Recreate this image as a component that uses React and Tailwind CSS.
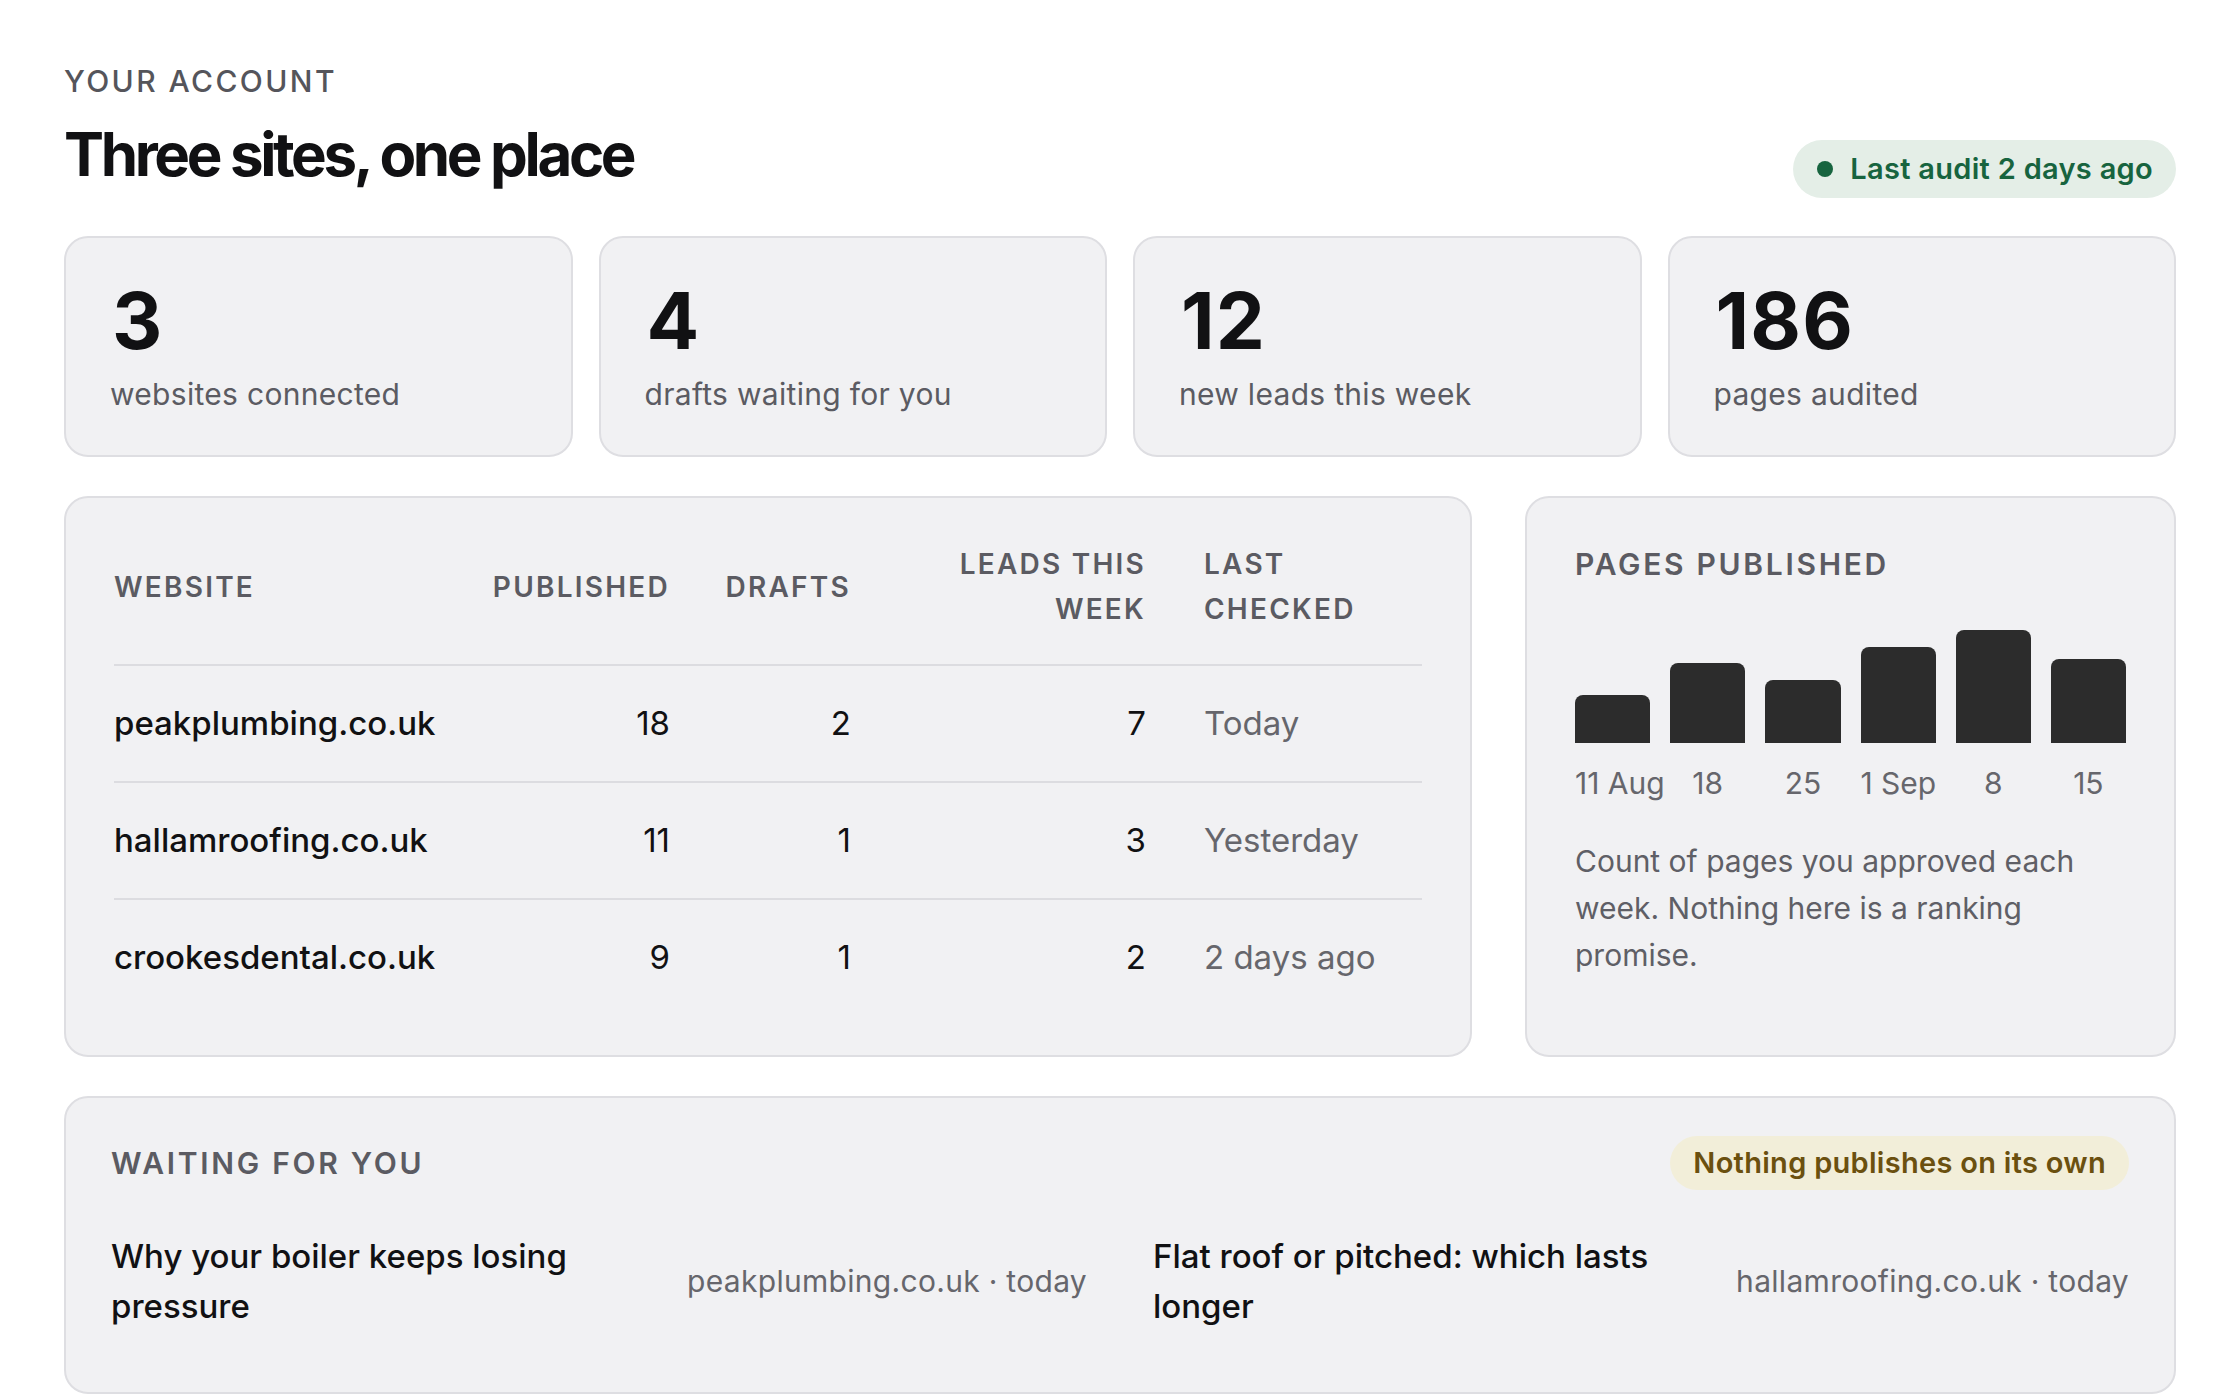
import React from 'react';

const STATS = [
  { value: '3', label: 'websites connected' },
  { value: '4', label: 'drafts waiting for you' },
  { value: '12', label: 'new leads this week' },
  { value: '186', label: 'pages audited' },
];

const SITES = [
  { site: 'peakplumbing.co.uk', published: 18, drafts: 2, leads: 7, checked: 'Today' },
  { site: 'hallamroofing.co.uk', published: 11, drafts: 1, leads: 3, checked: 'Yesterday' },
  { site: 'crookesdental.co.uk', published: 9, drafts: 1, leads: 2, checked: '2 days ago' },
];

const WEEKS = [
  { label: '11 Aug', height: 48 },
  { label: '18', height: 80 },
  { label: '25', height: 63 },
  { label: '1 Sep', height: 96 },
  { label: '8', height: 113 },
  { label: '15', height: 84 },
];

const WAITING = [
  { title: 'Why your boiler keeps losing pressure', meta: 'peakplumbing.co.uk · today' },
  { title: 'Flat roof or pitched: which lasts longer', meta: 'hallamroofing.co.uk · today' },
];

const card = 'rounded-[24px] border-2 border-[#dedee2] bg-[#f1f1f3]';
const eyebrow = 'text-[28px] font-semibold uppercase tracking-[0.08em] text-[#5b5b62]';
const sectionTitle = 'text-[30px] font-semibold uppercase tracking-[0.09em] text-[#5b5b62]';
const cols = 'grid grid-cols-[366px_190px_181px_295px_1fr]';

export default function App() {
  return (
    <div className="min-h-screen bg-white px-[64px] pt-[66px] pb-[40px] font-['Inter','Noto_Sans',sans-serif] text-[#111113]">
      {/* Header */}
      <div className="flex items-end justify-between">
        <div>
          <p className="text-[30px] font-medium uppercase leading-none tracking-[0.08em] text-[#55555b]">Your account</p>
          <h1 className="mt-[28px] pb-[14px] text-[60px] font-bold leading-none tracking-[-0.056em]">Three sites, one place</h1>
        </div>
        <div className="flex h-[58px] items-center gap-[17px] rounded-full bg-[#e4eee7] pl-[24px] pr-[23px]">
          <span className="h-[16px] w-[16px] rounded-full bg-[#17643f]" />
          <span className="text-[29px] font-semibold tracking-[0.01em] text-[#17643f]">Last audit 2 days ago</span>
        </div>
      </div>

      {/* Stat cards */}
      <div className="mt-[38px] grid grid-cols-4 gap-[26px]">
        {STATS.map((s) => (
          <div key={s.label} className={`${card} h-[221px] px-[44px] pt-[44px]`}>
            <p className="pl-[2px] text-[78px] font-bold leading-none tracking-[0.015em]">{s.value}</p>
            <p className="mt-[19px] text-[30px] leading-none tracking-[0.01em] text-[#5b5b62]">{s.label}</p>
          </div>
        ))}
      </div>

      {/* Table + chart */}
      <div className="mt-[39px] grid grid-cols-[1fr_651px] gap-[53px]">
        <div className={`${card} px-[48px] pt-[44px] pb-[40px]`}>
          <div className={`${cols} items-center pb-[32px] leading-[45px] ${eyebrow}`}>
            <span>Website</span>
            <span className="text-right">Published</span>
            <span className="text-right">Drafts</span>
            <span className="text-right">Leads this<br />week</span>
            <span className="pl-[58px]">Last<br />checked</span>
          </div>
          {SITES.map((r) => (
            <div key={r.site} className={`${cols} h-[117px] items-center border-t-2 border-[#dcdce0] text-[33px]`}>
              <span className="font-medium">{r.site}</span>
              <span className="text-right">{r.published}</span>
              <span className="text-right">{r.drafts}</span>
              <span className="text-right">{r.leads}</span>
              <span className="pl-[58px] text-[#66666c]">{r.checked}</span>
            </div>
          ))}
        </div>

        <div className={`${card} px-[48px] pt-[44px]`}>
          <p className={`${sectionTitle} leading-[45px]`}>Pages published</p>
          <div className="mt-[36px] flex h-[120px] items-end gap-[20px]">
            {WEEKS.map((w) => (
              <div key={w.label} className="flex-1 rounded-t-[8px] bg-[#2c2c2c]" style={{ height: w.height }} />
            ))}
          </div>
          <div className="mt-[25px] grid grid-cols-6 gap-[20px] text-center text-[30px] leading-none text-[#66666c]">
            {WEEKS.map((w) => (
              <span key={w.label} className="whitespace-nowrap">{w.label}</span>
            ))}
          </div>
          <p className="mt-[40px] text-[30px] leading-[47px] text-[#5f5f66]">
            Count of pages you approved each week. Nothing here is a ranking promise.
          </p>
        </div>
      </div>

      {/* Waiting for you */}
      <div className={`${card} mt-[39px] px-[45px] pt-[38px] pb-[61px]`}>
        <div className="flex items-center justify-between">
          <p className={sectionTitle}>Waiting for you</p>
          <span className="flex h-[54px] items-center rounded-full bg-[#f2eed9] px-[23px] text-[29px] font-semibold tracking-[0.01em] text-[#6b500f]">
            Nothing publishes on its own
          </span>
        </div>
        <div className="mt-[41px] grid grid-cols-2 gap-[66px]">
          {WAITING.map((d) => (
            <div key={d.title} className="flex items-center justify-between gap-[40px]">
              <p className="min-w-0 flex-1 text-[33px] font-medium leading-[50px]">{d.title}</p>
              <p className="shrink-0 text-[30px] tracking-[0.01em] text-[#66666c]">{d.meta}</p>
            </div>
          ))}
        </div>
      </div>
    </div>
  );
}
